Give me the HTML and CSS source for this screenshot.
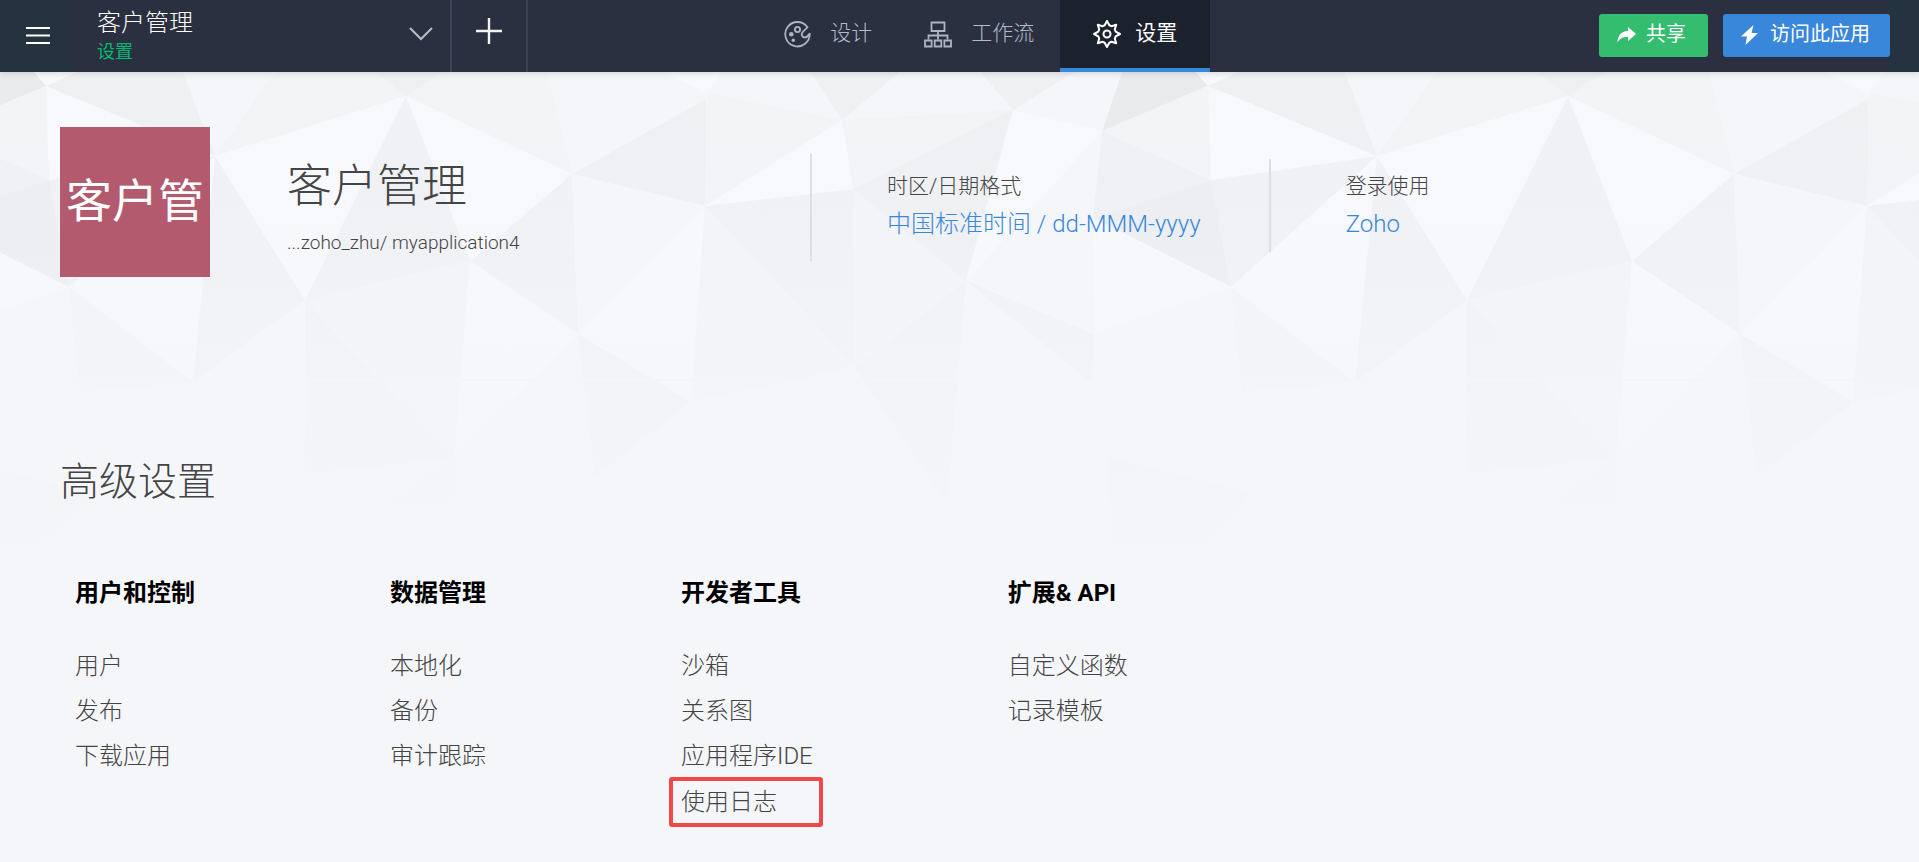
FILE: index.html
```html
<!DOCTYPE html>
<html lang="zh-CN">
<head>
    <meta charset="utf-8">
    <title>客户管理 - 设置</title>
    <link rel="stylesheet" href="styles.css">
</head>
<body>
<header class="topbar">
    <button class="menu-btn" aria-label="菜单">
        <svg width="24" height="17" viewBox="0 0 24 17"><path d="M0 1h24M0 8.5h24M0 16h24" stroke="#fff" stroke-width="2"/></svg>
    </button>
    <button class="app-switch">
        <span class="app-names">
            <span class="app-name">客户管理</span>
            <span class="app-page">设置</span>
        </span>
        <svg width="24" height="14" viewBox="0 0 24 14"><path d="M1 1l11 11L23 1" fill="none" stroke="#b9bcc3" stroke-width="2"/></svg>
    </button>
    <button class="add-btn" aria-label="新建">
        <svg width="26" height="26" viewBox="0 0 26 26"><path d="M13 0v26M0 13h26" stroke="#f4f4f4" stroke-width="2.4"/></svg>
    </button>
    <nav class="tabs">
        <a class="tab" href="#">
            <svg width="27" height="27" viewBox="0 0 27 27" fill="none" stroke="#aeb3c4" stroke-width="1.8">
                <path d="M23.5 6.2A12.2 12.2 0 1 0 25.7 12.6c-1.300 1.600-2.300 3.800-4.600 3.900-2.600 0-4.200-2.600-2.900-4.800 1-1.800 3.800-3.600 5.300-5.500z" stroke-linejoin="round"/>
                <circle cx="13.500" cy="8.500" r="2.600"/>
                <circle cx="7.300" cy="13.300" r="2.300" fill="#aeb3c4" stroke="none"/>
                <circle cx="9.300" cy="19.300" r="1.700" fill="#aeb3c4" stroke="none"/>
            </svg>
            <span>设计</span>
        </a>
        <a class="tab" href="#">
            <svg width="28" height="27" viewBox="0 0 28 27" fill="none" stroke="#aeb3c4" stroke-width="1.800">
                <path d="M7.500 1.500h13v8.500h-13zM14 10v8.500M4.500 18.500V14.500h19v4"/>
                <path d="M1 19.500h6.600v6H1zM10.700 19.500h6.600v6h-6.600zM20.400 19.500H27v6h-6.600z"/>
            </svg>
            <span>工作流</span>
        </a>
        <a class="tab tab-active" href="#">
            <svg width="28" height="28" viewBox="0 0 28 28" fill="none" stroke="#fff" stroke-width="2" stroke-linejoin="round">
                <path d="M14 1l2.300 4.300 2.300 .9 4.600-1.400-1.400 4.600 .9 2.300L27 14l-4.300 2.300-.9 2.300 1.400 4.600-4.600-1.400-2.300 .9L14 27l-2.300-4.300-2.300-.9-4.600 1.400 1.400-4.600-.9-2.300L1 14l4.300-2.300 .9-2.300-1.400-4.600 4.600 1.400 2.300-.9z"/>
                <circle cx="14" cy="14" r="3.500"/>
            </svg>
            <span>设置</span>
        </a>
    </nav>
    <div class="actions">
        <button class="btn btn-share">
            <svg width="19" height="16" viewBox="0 0 19 16"><path d="M11 0l8 7-8 7v-4C6 10 3 11 .5 15.500 .5 9 4 4 11 4z" fill="#fff"/></svg>
            <span>共享</span>
        </button>
        <button class="btn btn-visit">
            <svg width="17" height="20" viewBox="0 0 17 20"><path d="M12.500 0L0 11.500h6L4.500 20 17 8h-6.500z" fill="#fff"/></svg>
            <span>访问此应用</span>
        </button>
    </div>
</header>

<main class="page">
    <svg class="facets" width="100%" height="500" aria-hidden="true">
        <defs>
            <linearGradient id="fade" x1="0" y1="0" x2="0" y2="1">
                <stop offset="0" stop-color="#f5f6fa" stop-opacity=".1"/>
                <stop offset=".35" stop-color="#f5f6fa" stop-opacity=".25"/>
                <stop offset=".65" stop-color="#f5f6fa" stop-opacity=".65"/>
                <stop offset="1" stop-color="#f5f6fa" stop-opacity="1"/>
            </linearGradient>
            <!-- one repeat of the backdrop, 1162px wide -->
            <g id="tile">
                <g fill="#e8e9eb">
                    <path d="M1122 0H1196L1208 14 1102 59z"/>
                </g>
                <g fill="#ebecef">
                    <path d="M1093 146L1211 108 1231 215z"/>
                </g>
                <g fill="#edeff1">
                    <path d="M1208 14L1238 0H1345L1377 84z"/>
                    <path d="M1538 0H1605L1568 24z"/>
                    <path d="M810 0H900L842 48z"/>
                    <path d="M980 0H1075L1013 38z"/>
                    <path d="M1734 102L1868 27V134z"/>
                    <path d="M1102 59L1211 108 1093 146z"/>
                    <path d="M1013 38L966 209 853 117z"/>
                </g>
                <g fill="#eff0f3">
                    <path d="M1211 108L1377 84 1231 215z"/>
                    <path d="M1568 24L1632 189 1467 228z"/>
                    <path d="M1377 84L1467 228 1355 310z"/>
                    <path d="M1734 102L1632 189 1740 262z"/>
                    <path d="M705 134L853 117 855 295z"/>
                    <path d="M966 209L1094 262 1091 310z"/>
                    <path d="M1740 262L1853 330 1757 405z"/>
                    <path d="M966 209L947 432 855 295z"/>
                    <path d="M1467 228L1616 386 1467 402z"/>
                    <path d="M1108 385L1251 421 1180 500H1112z"/>
                </g>
                <g fill="#f2f3f5">
                    <path d="M1208 14L1211 108 1102 59z"/>
                    <path d="M1437 0H1538L1568 24 1377 84z"/>
                    <path d="M1605 0H1709L1734 102 1568 24z"/>
                    <path d="M707 21L842 48 705 134z"/>
                    <path d="M842 48L1013 38 853 117z"/>
                    <path d="M853 117L966 209 855 295z"/>
                    <path d="M1467 228L1632 189 1616 386z"/>
                    <path d="M1231 215L1355 310 1242 320z"/>
                    <path d="M705 134L855 295 691 330z"/>
                    <path d="M1616 386L1614 438H1540z"/>
                </g>
                <g fill="#f5f6f9">
                    <path d="M707 21L723 0H810L842 48z"/>
                    <path d="M900 0H980L1013 38 842 48z"/>
                    <path d="M1075 0H1122L1102 59 1013 38z"/>
                    <path d="M1345 0H1437L1377 84z"/>
                    <path d="M1709 0H1825L1868 21V27L1734 102z"/>
                    <path d="M1102 59L1093 146 966 209z"/>
                    <path d="M1734 102L1867 134 1740 262z"/>
                    <path d="M966 209L1093 146 1094 262z"/>
                </g>
                <g fill="#f8f9fd">
                    <path d="M1196 0H1238L1208 14z"/>
                    <path d="M1825 0H1885L1868 21z"/>
                    <path d="M1208 14L1377 84 1211 108z"/>
                    <path d="M1377 84L1355 310 1231 215z"/>
                    <path d="M1377 84L1568 24 1467 228z"/>
                    <path d="M1568 24L1734 102 1632 189z"/>
                    <path d="M842 48L853 117 705 134z"/>
                    <path d="M1013 38L1102 59 966 209z"/>
                    <path d="M1867 134L1853 330 1740 262z"/>
                    <path d="M1093 146L1231 215 1094 262z"/>
                    <path d="M1632 189L1740 262 1616 386z"/>
                </g>
            </g>
        </defs>
        <use href="#tile" x="-1162"/>
        <use href="#tile"/>
        <use href="#tile" x="1162"/>
        <rect width="100%" height="500" fill="url(#fade)"/>
    </svg>

    <section class="summary">
        <div class="logo">客户管</div>
        <div class="identity">
            <h1 class="title">客户管理</h1>
            <p class="path">...zoho_zhu/ myapplication4</p>
        </div>
        <div class="info info-zone">
            <p class="label">时区/日期格式</p>
            <a class="value" href="#">中国标准时间 / dd-MMM-yyyy</a>
        </div>
        <div class="info">
            <p class="label">登录使用</p>
            <a class="value" href="#">Zoho</a>
        </div>
    </section>

    <section class="advanced">
        <h2 class="heading">高级设置</h2>
        <div class="columns">
            <div class="column">
                <h3>用户和控制</h3>
                <ul>
                    <li><a href="#">用户</a></li>
                    <li><a href="#">发布</a></li>
                    <li><a href="#">下载应用</a></li>
                </ul>
            </div>
            <div class="column">
                <h3>数据管理</h3>
                <ul>
                    <li><a href="#">本地化</a></li>
                    <li><a href="#">备份</a></li>
                    <li><a href="#">审计跟踪</a></li>
                </ul>
            </div>
            <div class="column">
                <h3>开发者工具</h3>
                <ul>
                    <li><a href="#">沙箱</a></li>
                    <li><a href="#">关系图</a></li>
                    <li><a href="#">应用程序IDE</a></li>
                    <li class="marked"><a href="#">使用日志</a></li>
                </ul>
            </div>
            <div class="column">
                <h3>扩展&amp; API</h3>
                <ul>
                    <li><a href="#">自定义函数</a></li>
                    <li><a href="#">记录模板</a></li>
                </ul>
            </div>
        </div>
    </section>
</main>
</body>
</html>
```

FILE: styles.css
```css
* { box-sizing: border-box; margin: 0; padding: 0; }
body { background: #f5f6fa; color: #444; font-family: Roboto, "Noto Sans CJK SC", sans-serif; font-weight: 300; }
a { color: inherit; text-decoration: none; }
ul { list-style: none; }
button { border: 0; background: none; color: inherit; font: inherit; cursor: pointer; }
svg { display: block; flex: none; }

/* top bar */
.topbar { position: relative; z-index: 1; display: flex; height: 72px; padding-right: 29px; background: linear-gradient(90deg, #25323f 70px, #2a3040 70px, #2a3040 calc(100% - 30px), #25323f calc(100% - 30px)); color: #fff; box-shadow: 0 1px 6px rgba(0, 0, 0, 0.15); }
.menu-btn { display: flex; align-items: center; width: 70px; padding: 0 0 2px 26px; }
.app-switch { display: flex; align-items: center; justify-content: space-between; width: 382px; padding: 0 17px 4px 27px; border-right: 2px solid #3d4458; text-align: left; }
.app-names { display: flex; flex-direction: column; padding-top: 4px; }
.app-name { font-size: 24px; line-height: 32px; }
.app-page { color: #04b873; font-size: 18px; font-weight: 400; line-height: 26px; }
.add-btn { display: flex; align-items: center; justify-content: center; width: 76px; padding-bottom: 10px; border-right: 2px solid #3d4458; }
.tabs { display: flex; flex: 1; margin-left: 12vw; }
.tab { display: flex; align-items: center; gap: 19px; padding: 0 26px 4px; color: #b5bacb; font-size: 21px; line-height: 28px; }
.tab span, .btn span { padding-bottom: 3px; }
.tab-active { gap: 14px; padding: 0 33px; border-bottom: 4px solid #3987da; background: #1c212e; color: #fff; font-weight: 400; }
.actions { display: flex; align-items: center; gap: 15px; padding-bottom: 2px; }
.btn { display: flex; align-items: center; height: 43px; border-radius: 3px; font-size: 20px; font-weight: 400; line-height: 28px; }
.btn-share { gap: 10px; padding: 0 22px 0 18px; background: #35bd6f; }
.btn-visit { gap: 12px; padding: 0 20px 0 18px; background: #3987da; }

/* application summary */
.page { position: relative; }
.facets { position: absolute; top: 0; left: 0; z-index: -1; }
.summary { display: flex; height: 309px; margin: 0 60px; padding-top: 55px; border-bottom: 2px solid #f5f5f5; }
.logo { display: flex; justify-content: center; width: 150px; height: 150px; background: #b35a6e; color: #fff; font-size: 46px; font-weight: 400; line-height: 148px; }
.identity { width: 600px; padding: 27px 0 0 77px; }
.title { font-size: 45px; font-weight: 300; line-height: 66px; }
.path { font-size: 19px; line-height: 46px; }
.info { height: 93px; margin-top: 32px; padding: 12px 75px 0; border-left: 2px solid #dfdfdf; }
.info-zone { height: 107px; margin-top: 27px; padding: 17px 68px 0 75px; }
.label { font-size: 21px; line-height: 30px; }
.value { display: block; color: #3987da; font-size: 24px; line-height: 46px; white-space: nowrap; }

/* advanced settings */
.advanced { padding: 71px 60px 16px; }
.heading { font-size: 39px; font-weight: 300; line-height: 60px; }
.columns { display: flex; gap: 195px; padding: 63px 15px 0; }
.column { font-size: 24px; }
.column h3 { color: #000; font-size: 24px; font-weight: 700; line-height: 36px; }
.column ul { padding-top: 33px; }
.column li { line-height: 45px; white-space: nowrap; }
.column .marked { margin: -2px -10px 0 -12px; padding-left: 8px; border: 4px solid #ef4848; border-radius: 3px; line-height: 42px; }
```
